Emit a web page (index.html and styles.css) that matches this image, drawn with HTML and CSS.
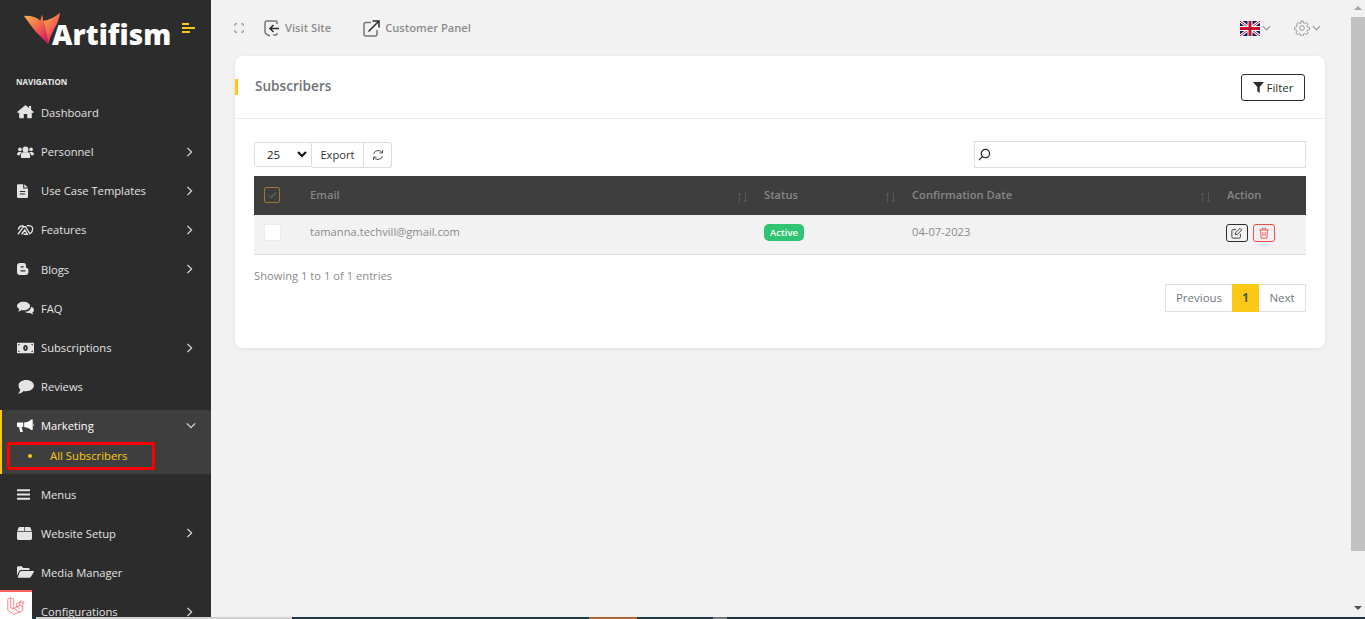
FILE: index.html
```html
<!DOCTYPE html>
<html lang="en">
<head>
<meta charset="utf-8">
<title>Subscribers</title>
<link rel="stylesheet" href="styles.css">
</head>
<body>
<div class="app">
  <aside class="sidebar">
    <div class="brand">
      <div class="logo">
        <svg class="logo-wings" viewBox="0 0 42 36"><defs><linearGradient id="wg" x1="0" y1="0" x2="0.7" y2="1"><stop offset="0" stop-color="#fdb44b"/><stop offset="0.55" stop-color="#f4664f"/><stop offset="1" stop-color="#e0126f"/></linearGradient></defs><path fill="url(#wg)" d="M0 3.500 Q12 3 18 9 L20 2 L27 35 Q18 26 13 21 Q6 12 0 3.500Z"/><path fill="url(#wg)" d="M21.500 9 Q30 8 40 0 Q38 10 35 15 L29 27 L27 34 Z"/></svg>
        <span class="logo-text">Artifism</span>
      </div>
      <svg class="toggle" viewBox="0 0 13 10"><path d="M0 0h7v2H0zM0 4h13v2H0zM0 8h8v2H0z"/></svg>
    </div>
    <div class="nav-label">NAVIGATION</div>
    <nav class="nav">
      <a class="nav-item"><svg class="nav-icon" viewBox="0 0 24 20"><path d="M12 3 3 10.500v7.500q0 1 1 1h5.500v-6h5v6H20q1 0 1-1v-7.500zM12 0 0 10l1.500 1.700L12 3l10.500 8.700L24 10l-4-3.300V1.500h-3v2.700z"/></svg><span class="nav-text">Dashboard</span></a>
      <a class="nav-item"><svg class="nav-icon" viewBox="0 0 26 18"><circle cx="13" cy="5" r="4.500"/><circle cx="4.500" cy="5" r="2.800"/><circle cx="21.500" cy="5" r="2.800"/><path d="M6 17v-3q0-4.500 4-4.500h6q4 0 4 4.500v3q0 1-1 1H7q-1 0-1-1zM0 13q0-4 3-4h3q1 0 1.500.5Q4.500 11 4.500 14H1q-1 0-1-1zM26 13q0-4-3-4h-3q-1 0-1.500.5 3 1.500 3 4.500H25q1 0 1-1z"/></svg><span class="nav-text">Personnel</span><svg class="chev" viewBox="0 0 8 12"><path d="M1.500 1 6.500 6l-5 5"/></svg></a>
      <a class="nav-item"><svg class="nav-icon file" viewBox="0 0 16 20"><path fill-rule="evenodd" d="M1.500 0H9v6.500h7V18.500q0 1.500-1.500 1.500h-13Q0 20 0 18.500v-17Q0 0 1.500 0zM4 10v1.500h8V10zM4 13.500V15h8v-1.500zM10.500 0 16 5h-5.500z"/></svg><span class="nav-text">Use Case Templates</span><svg class="chev" viewBox="0 0 8 12"><path d="M1.500 1 6.500 6l-5 5"/></svg></a>
      <a class="nav-item"><svg class="nav-icon stroke-icon" viewBox="0 0 26 17"><path d="M1.500 15 10 3.500h3L20 15M7 15l5-6.500 4 6.500H10M2 8Q3 2 10 2M15 2q9-1 9 5 0 4-3.500 7"/></svg><span class="nav-text">Features</span><svg class="chev" viewBox="0 0 8 12"><path d="M1.500 1 6.500 6l-5 5"/></svg></a>
      <a class="nav-item"><svg class="nav-icon blog" viewBox="0 0 20 20"><path fill-rule="evenodd" d="M5 0h6q4 0 4 4v3q0 1 1.500 1.500Q19 9 19 11v4q0 5-5 5H5q-5 0-5-5V5q0-5 5-5zM6 5.500v2h5v-2zM6 12v2h8v-2z"/></svg><span class="nav-text">Blogs</span><svg class="chev" viewBox="0 0 8 12"><path d="M1.500 1 6.500 6l-5 5"/></svg></a>
      <a class="nav-item"><svg class="nav-icon" viewBox="0 0 26 19"><path d="M10 0c5.500 0 10 3 10 6.500S15.500 13 10 13q-1.500 0-3-.3Q4 15 1.500 15q1.500-1.500 2-4Q0 9.500 0 6.500C0 3 4.500 0 10 0z"/><path d="M22 7.500q4 1.500 4 5 0 2.500-2.500 4 .3 1.500 1.500 2.500-2.500 0-4.500-2-1 .3-2.500.3-4 0-6-2 8 0 10-8z"/></svg><span class="nav-text">FAQ</span></a>
      <a class="nav-item"><svg class="nav-icon" viewBox="0 0 26 16"><path fill-rule="evenodd" d="M0 0h26v16H0zM13 3.500c-2 0-3.500 2-3.500 4.500s1.500 4.500 3.500 4.500 3.500-2 3.500-4.500-1.500-4.500-3.500-4.500zM2 2v2.500L4.500 2zM24 2h-2.500L24 4.500zM2 14h2.500L2 11.500zM24 14v-2.500L21.500 14zM12.400 6h1.200v4h-1.200z"/></svg><span class="nav-text">Subscriptions</span><svg class="chev" viewBox="0 0 8 12"><path d="M1.500 1 6.500 6l-5 5"/></svg></a>
      <a class="nav-item"><svg class="nav-icon" viewBox="0 0 24 20"><path d="M13 0c6 0 11 3.300 11 8s-5 8-11 8q-2 0-3.500-.4Q6 19.500 1 19.800q3-2.300 3.500-6.300Q2 11.500 2 8c0-4.700 5-8 11-8z"/></svg><span class="nav-text">Reviews</span></a>
      <div class="nav-group">
        <a class="nav-item head"><svg class="nav-icon white" viewBox="0 0 26 20"><path d="M22 0h2v16h-2q-4-4-11-4.500V4.500Q18 4 22 0zM1 4.500h8.500v7H7l2 7.500H5L3 11.500H1q-1 0-1-1v-5q0-1 1-1zM25 6q1 .5 1 2t-1 2z"/></svg><span class="nav-text">Marketing</span><svg class="chev" viewBox="0 0 12 8"><path d="M1 1.500 6 6.500l5-5"/></svg></a>
        <a class="sub-item"><i class="dot"></i><span>All Subscribers</span></a>
      </div>
      <a class="nav-item"><svg class="nav-icon bars" viewBox="0 0 20 16"><path d="M0 0h20v3H0zM0 6.500h20v3H0zM0 13h20v3H0z"/></svg><span class="nav-text">Menus</span></a>
      <a class="nav-item"><svg class="nav-icon box" viewBox="0 0 22 19"><path d="M4 0h6.500v6H0.500L2 1.500Q2.500 0 4 0zM11.500 0H18q1.500 0 2 1.500L21.500 6h-10zM0 7h22V17q0 2-2 2H2q-2 0-2-2z"/></svg><span class="nav-text">Website Setup</span><svg class="chev" viewBox="0 0 8 12"><path d="M1.500 1 6.500 6l-5 5"/></svg></a>
      <a class="nav-item"><svg class="nav-icon" viewBox="0 0 25 17"><path d="M0 14V1.500Q0 0 1.500 0H7l2 2.500h8q1.500 0 1.500 1.500v1.500H6Q4 5.500 3 7.500zM1 17h17q1.500 0 2.500-1.500L25 8q.5-1-1-1H7Q5 7 4 8.500z"/></svg><span class="nav-text">Media Manager</span></a>
      <a class="nav-item"><svg class="nav-icon" viewBox="0 0 20 20"><circle cx="10" cy="10" r="8"/></svg><span class="nav-text">Configurations</span><svg class="chev" viewBox="0 0 8 12"><path d="M1.500 1 6.500 6l-5 5"/></svg></a>
    </nav>
  </aside>

  <main class="main">
    <header class="topbar">
      <div class="top-left">
        <svg class="fs-icon" viewBox="0 0 10 10"><path d="M.7 3V1.800q0-1.100 1.100-1.100H3M7 .7h1.200q1.100 0 1.100 1.100V3M9.300 7v1.200q0 1.100-1.100 1.100H7M3 9.300H1.800q-1.100 0-1.100-1.100V7"/></svg>
        <a class="top-link visit"><svg class="tl-icon" viewBox="0 0 16 17"><path class="g" d="M8 1H3Q1 1 1 3v9l1 2 4 2M8 1l4 0q1 0 1 1v2M13 13v1q0 1-1 1H9"/><path class="k" d="M15 8.500H6M9.500 5 6 8.500l3.500 3.500"/></svg><span>Visit Site</span></a>
        <a class="top-link"><svg class="tl-icon big" viewBox="0 0 17 17"><path class="g" d="M8 2.500H3Q1 2.500 1 4.500V14q0 2 2 2h9q2 0 2-2v-4"/><path class="k" d="M5.500 11.500 15.500 1.500M9.500 1H16v6.500"/></svg><span>Customer Panel</span></a>
      </div>
      <div class="top-right">
        <svg class="flag" viewBox="0 0 60 45"><rect width="60" height="45" fill="#012169"/><path d="M0 0 60 45M60 0 0 45" stroke="#fff" stroke-width="9"/><path d="M0 0 60 45M60 0 0 45" stroke="#c8102e" stroke-width="3"/><path d="M30 0V45M0 22.500H60" stroke="#fff" stroke-width="15"/><path d="M30 0V45M0 22.500H60" stroke="#c8102e" stroke-width="9"/></svg>
        <svg class="top-chev first" viewBox="0 0 10 6"><path d="M1 1l4 4 4-4"/></svg>
        <svg class="gear" viewBox="0 0 24 24"><circle cx="12" cy="12" r="3.500"/><path d="M10.300 1.500h3.400l.6 3.100 1.900.8 2.600-1.800 2.400 2.400-1.800 2.600.8 1.900 3.100.6v3.400l-3.100.6-.8 1.900 1.800 2.600-2.400 2.400-2.600-1.800-1.900.8-.6 3.100h-3.400l-.6-3.100-1.900-.8-2.600 1.800-2.400-2.400 1.800-2.600-.8-1.900-3.100-.6v-3.400l3.100-.6.800-1.900L3.800 6l2.400-2.400 2.600 1.800 1.900-.8z"/></svg>
        <svg class="top-chev" viewBox="0 0 10 6"><path d="M1 1l4 4 4-4"/></svg>
      </div>
    </header>

    <section class="card">
      <div class="card-head">
        <h1 class="card-title">Subscribers</h1>
        <button class="filter-btn"><svg class="filter-icon" viewBox="0 0 12 12"><path d="M0 0h12L7.300 5.500V12L4.700 10V5.500z"/></svg>Filter</button>
      </div>
      <div class="card-body">
        <div class="controls">
          <div class="btn-group">
            <div class="page-size"><span>25</span><svg class="size-chev" viewBox="0 0 10 7"><path d="M1 1l4 4 4-4"/></svg></div>
            <div class="ctl-btn">Export</div>
            <div class="ctl-btn refresh"><svg class="refresh-icon" viewBox="0 0 12 12"><path d="M1.500 5Q2.500 1.500 6 1.500q2.500 0 4 2M10.500 7Q9.500 10.500 6 10.500q-2.500 0-4-2M10.500 1v3h-3M1.500 11V8h3"/></svg></div>
          </div>
          <div class="search"><svg class="search-icon" viewBox="0 0 14 14"><circle cx="8" cy="6" r="4.500"/><path d="M4.700 9.300 1 13"/></svg></div>
        </div>
        <table class="table">
          <colgroup><col class="c-check"><col class="c-email"><col class="c-status"><col class="c-date"><col class="c-action"></colgroup>
          <thead>
            <tr>
              <th><span class="check head-check"><svg viewBox="0 0 10 8"><path d="M1 4.500 3.500 7 9 1"/></svg></span></th>
              <th><div class="th-in">Email<svg class="sort" viewBox="0 0 11 11"><path d="M2.500 10.500V1M.8 3 2.500 1 4.200 3M8.500.5V10M6.800 8l1.700 2 1.700-2"/></svg></div></th>
              <th><div class="th-in">Status<svg class="sort" viewBox="0 0 11 11"><path d="M2.500 10.500V1M.8 3 2.500 1 4.200 3M8.500.5V10M6.800 8l1.700 2 1.700-2"/></svg></div></th>
              <th><div class="th-in">Confirmation Date<svg class="sort" viewBox="0 0 11 11"><path d="M2.500 10.500V1M.8 3 2.500 1 4.200 3M8.500.5V10M6.800 8l1.700 2 1.700-2"/></svg></div></th>
              <th>Action</th>
            </tr>
          </thead>
          <tbody>
            <tr>
              <td><span class="check"></span></td>
              <td>tamanna.techvill@gmail.com</td>
              <td><span class="badge">Active</span></td>
              <td>04-07-2023</td>
              <td><div class="actions"><span class="act edit"><svg viewBox="0 0 14 14"><path d="M11 8v3.500q0 1.500-1.500 1.500h-7Q1 13 1 11.500v-7Q1 3 2.500 3H6"/><path d="M5.500 6.500 10.500 1.500l2 2-5 5-2.500.5z"/></svg></span><span class="act del"><svg viewBox="0 0 14 14"><path d="M1.500 3.500h11M5 3.500V1.500h4v2M3 3.500l.5 9.500h7l.5-9.500M5.700 6v4.500M8.300 6v4.500"/></svg></span></div></td>
            </tr>
          </tbody>
        </table>
        <div class="info">Showing 1 to 1 of 1 entries</div>
        <div class="pager-row">
          <div class="pager"><span class="pg prev">Previous</span><span class="pg cur">1</span><span class="pg next">Next</span></div>
        </div>
      </div>
    </section>
  </main>

  <div class="scrollbar">
    <i class="arrow up"></i>
    <div class="thumb"></div>
    <i class="arrow down"></i>
  </div>
</div>
<div class="strip"><i class="s1"></i><i class="s2"></i><i class="s3"></i><i class="s4"></i><i class="s3b"></i><i class="s5"></i><i class="s6"></i></div>

<div class="debug-tab"><svg viewBox="0 0 24 25"><path d="M1 3.500 5 1.500l4 2V16l8 4.500 4-2.200M1 3.500V18l8 5.500 8-3M5 1.500V15l4 1M9 16l8-4.500V7.500M17 11.500l4 2V9l-4-2-4 2v4.500l4 2.500M21 9l2-1-4-2.500-2 1.500M21 13.500v5"/></svg></div>
<div class="highlight"></div>
</body>
</html>
```

FILE: styles.css
```css
* { box-sizing: border-box; }
html, body { margin: 0; height: 100%; overflow: hidden; }
body { font-family: "Open Sans", sans-serif; background: #f2f2f2; color: #898989; font-size: 11.200px; }
a { text-decoration: none; color: inherit; }
.app { display: flex; height: 617px; }

/* sidebar */
.sidebar { width: 211px; flex: none; background: #2c2c2c; overflow: hidden; color: #e2e2e2; }
.brand { display: flex; height: 74px; position: relative; padding: 12px 0 0 24px; }
.logo { position: relative; width: 150px; height: 40px; }
.logo-wings { position: absolute; left: 0; top: 0; width: 38px; height: 34px; }
.logo-text { position: absolute; left: 28px; top: 4px; color: #fff; font: 800 28px/36px "Open Sans", sans-serif; letter-spacing: .1px; }
.toggle { position: absolute; left: 182px; top: 23px; width: 13px; height: 10px; fill: #fcc917; }
.nav-label { height: 18.800px; padding-left: 16px; padding-top: 1px; font-size: 8px; font-weight: 700; line-height: 14px; color: #e8e8e8; }
.nav-item { display: flex; align-items: center; height: 39.200px; padding-left: 17px; position: relative; }
.nav-text { position: absolute; left: 41px; font-size: 11.200px; font-weight: 500; color: #e2e2e2; }
.nav-icon { width: 17px; height: 14px; fill: #e4e4e4; display: block; }
.nav-icon.file { width: 11px; height: 14px; }
.nav-icon.blog { width: 12px; height: 12px; }
.nav-icon.bars { width: 13px; height: 11px; }
.nav-icon.box { width: 15px; height: 13px; }
.nav-icon.white { fill: #fff; }
.stroke-icon { fill: none; stroke: #e4e4e4; stroke-width: 2; }
.chev { position: absolute; left: 186px; width: 7px; height: 10px; fill: none; stroke: #d8d8d8; stroke-width: 1.500; }
.nav-group { margin: 3.600px 0 .600px; height: 64px; background: #3e3e3e; border-left: 2px solid #fcc917; }
.nav-group .head { height: 32px; padding-left: 15px; }
.nav-group .nav-text { left: 39px; font-weight: 500; color: #fff; }
.nav-group .chev { left: 184px; width: 10px; height: 7px; }
.sub-item { display: flex; align-items: center; height: 28px; padding-left: 26px; color: #fcc917; font-size: 11.300px; font-weight: 500; }
.dot { width: 4px; height: 4px; border-radius: 50%; background: #fcc917; margin-right: 18px; }

/* main */
.main { flex: 1; min-width: 0; padding: 0 25px 0 24px; }
.topbar { height: 56px; display: flex; justify-content: space-between; align-items: center; }
.top-left { display: flex; align-items: center; }
.fs-icon { width: 10px; height: 10px; fill: none; stroke: #aaa; stroke-width: 1.500; margin-left: -1px; margin-right: 20px; }
.top-link { display: flex; align-items: center; font-size: 11.200px; font-weight: 600; color: #8c8c8c; margin-right: 32px; }
.top-link span { padding-bottom: 2px; }
.tl-icon { width: 16px; height: 17px; margin-right: 5px; fill: none; stroke-width: 1.500; }
.tl-icon.big { width: 17px; height: 17px; }
.tl-icon .g { stroke: #777; }
.tl-icon .k { stroke: #2c2c2c; }
.top-right { display: flex; align-items: center; padding-right: 4px; }
.flag { width: 20px; height: 15px; display: block; }
.top-chev { width: 9px; height: 6px; margin-left: 2px; fill: none; stroke: #8c9aa6; stroke-width: 1.300; }
.top-chev.first { margin-left: 2px; }
.gear { width: 16px; height: 16px; margin-left: 23px; fill: none; stroke: #8e8e8e; stroke-width: 1.300; }

.card { background: #fff; border-radius: 8px; height: 292px; box-shadow: 0 1px 4px rgba(0,0,0,.08); }
.card-head { height: 63px; border-bottom: 1px solid #ededed; display: flex; align-items: center; justify-content: space-between; padding: 0 20px; position: relative; }
.card-head::before { content: ""; position: absolute; left: 0; top: 23px; width: 3px; height: 16px; background: #fcc917; }
.card-title { margin: 0 0 3px; font-size: 13.600px; font-weight: 600; color: #6e7379; }
.filter-btn { height: 27px; width: 64px; margin-top: 1px; padding: 0; border: 1px solid #2c2c2c; border-radius: 3px; background: #fff; font: 500 11.500px "Open Sans", sans-serif; color: #2c2c2c; display: flex; align-items: center; justify-content: center; }
.filter-icon { width: 11px; height: 11px; fill: #2c2c2c; margin-right: 3px; }
.card-body { padding: 22px 19px 0; }
.controls { display: flex; justify-content: space-between; align-items: flex-start; height: 35px; }
.btn-group { display: flex; height: 26px; margin-top: 1px; }
.page-size { width: 58px; height: 25px; border: 1px solid #dedede; border-radius: 3px 0 0 3px; display: flex; align-items: center; justify-content: space-between; padding: 0 3px 0 12px; color: #222; font-size: 11.500px; }
.size-chev { width: 10px; height: 7px; fill: none; stroke: #111; stroke-width: 2; margin-right: 1px; }
.ctl-btn { width: 52px; border: 1px solid #dedede; border-left: none; display: flex; align-items: center; justify-content: center; color: #333; font-size: 11.200px; padding-bottom: 1px; }
.ctl-btn.refresh { width: 28px; border-radius: 0 3px 3px 0; padding-bottom: 0; }
.refresh-icon { width: 12px; height: 12px; fill: none; stroke: #555; stroke-width: 1; }
.search { width: 332px; height: 27px; border: 1px solid #dedede; display: flex; align-items: center; padding-left: 3px; }
.search-icon { width: 13px; height: 13px; fill: none; stroke: #222; stroke-width: 1.300; }

.table { width: 100%; table-layout: fixed; border-collapse: collapse; }
.c-check { width: 46px; }
.c-status { width: 148px; }
.c-date { width: 315px; }
.c-action { width: 89px; }
.table th { height: 39px; padding: 0 10px 2px; background: #3e3e3e; text-align: left; font-size: 11.200px; font-weight: 600; color: #868686; }
.th-in { display: flex; justify-content: space-between; align-items: center; position: relative; }
.sort { width: 11px; height: 11px; fill: none; stroke: #575757; stroke-width: 1; margin-right: -4px; margin-top: 5px; }
.table td { height: 39px; padding: 0 10px 6px; background: #f2f2f2; border-bottom: 1px solid #dedede; font-size: 11.200px; color: #8b8b8b; }
.check { display: block; width: 17px; height: 17px; margin-top: 2px; background: #fff; border: 1px solid #ececec; border-radius: 2px; }
.head-check { width: 16px; height: 16px; margin-top: 0; background: transparent; border: 1px solid #9b7d2a; display: flex; align-items: center; justify-content: center; }
.head-check svg { width: 9px; height: 8px; fill: none; stroke: #7c7c7c; stroke-width: 1; }
.badge { display: inline-block; width: 40px; height: 17px; margin-top: 3px; background: #2fc472; border-radius: 5px; color: #fff; font-size: 9.500px; font-weight: 600; line-height: 17px; text-align: center; }
.actions { display: flex; gap: 5px; margin: 4px 0 0 -1px; }
.act { display: flex; align-items: center; justify-content: center; width: 22px; height: 18px; border: 1px solid #2c2c2c; border-radius: 3px; }
.act svg { width: 12px; height: 12px; fill: none; stroke: #2c2c2c; stroke-width: 1; }
.act.del { border-color: #ef4a45; }
.act.del svg { stroke: #ef4a45; }

.info { margin-top: 13px; font-size: 11.200px; line-height: 16px; color: #8b8b8b; }
.pager-row { display: flex; justify-content: flex-end; margin-top: 0; }
.pager { display: flex; height: 28px; border: 1px solid #e0e0e0; }
.pg { display: flex; align-items: center; justify-content: center; font-size: 11.500px; font-weight: 500; color: #737a80; }
.prev { width: 66px; }
.cur { width: 27px; background: #fcc917; color: #4a5a20; font-weight: 700; margin: -1px 0; }
.next { width: 46px; }

/* scrollbar */
.scrollbar { width: 15px; flex: none; background: #f1f1f1; position: relative; padding-top: 17px; padding-left: 1px; }
.thumb { width: 14px; height: 534px; background: #c1c1c1; }
.arrow { position: absolute; left: 4px; width: 0; height: 0; border-left: 4px solid transparent; border-right: 4px solid transparent; }
.arrow.up { top: 6px; border-bottom: 4px solid #a3a3a3; }
.arrow.down { top: 606px; border-top: 4px solid #505050; }

.strip { display: flex; height: 2px; background: #1f3a44; }
.strip i { display: block; height: 2px; }
.s1 { width: 36px; background: #1f3a44; }
.s2 { width: 256px; background: #d0d0d0; }
.s3 { width: 297px; background: #1f3a44; }
.s4 { width: 48px; background: #b0662c; }
.s3b { width: 76px; background: #1f3a44; }
.s5 { width: 14px; background: #6a7a80; }
.s6 { flex: 1; background: #1a3040; }

.debug-tab { position: absolute; left: 0; top: 590px; width: 32px; height: 29px; background: #fff; border-top: 2px solid #f4645f; display: flex; align-items: center; justify-content: center; }
.debug-tab svg { width: 18px; height: 20px; fill: none; stroke: #f4645f; stroke-width: 1; }
.highlight { position: absolute; left: 7px; top: 442px; width: 148px; height: 28px; border: 3px solid #f00; border-radius: 1px; }
```
